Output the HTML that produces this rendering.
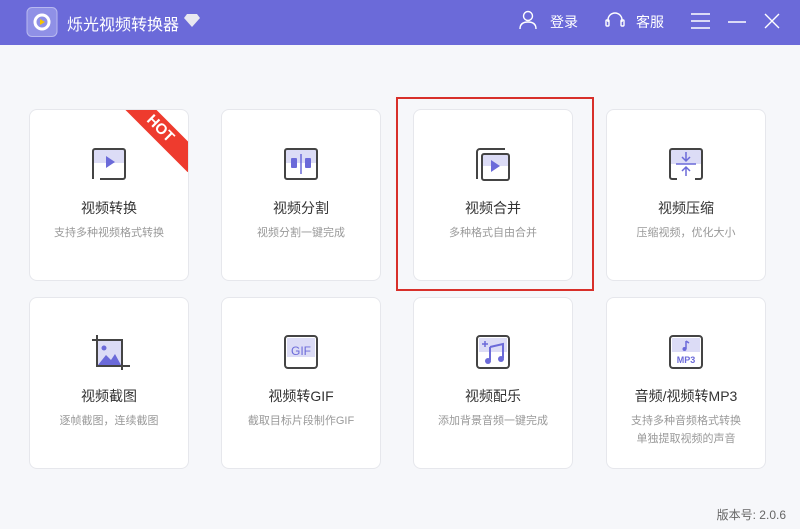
<!DOCTYPE html>
<html><head><meta charset="utf-8"><style>
*{margin:0;padding:0;box-sizing:border-box}
body{width:800px;height:529px;background:#f6f7fa;font-family:"Liberation Sans","Noto Sans CJK SC",sans-serif;position:relative;overflow:hidden}
.hd{position:absolute;left:0;top:0;width:800px;height:45px;background:#6b6ad9;color:#fff}
.card{position:absolute;width:160px;height:172px;background:#fff;border:1px solid #e6e7ec;border-radius:8px;text-align:center;overflow:hidden}
.card svg.ic{position:absolute;left:61px;top:36px}
.t{position:absolute;left:0;right:0;top:88px;font-size:14px;color:#333}
.s{position:absolute;left:0;right:0;top:114px;font-size:11px;color:#999;line-height:18px}
</style></head><body>
<div class="hd">
<svg style="position:absolute;left:26px;top:7px" width="32" height="30" viewBox="0 0 32 30"><rect x="1" y="0.5" width="30" height="29" rx="5" fill="#8f90e6" stroke="#b8b9f0"/><circle cx="16" cy="15" r="7" fill="none" stroke="#fff" stroke-width="3"/><path d="M14 12l5 3-5 3z" fill="#f5c400"/></svg>
<div style="position:absolute;left:67px;top:11px;font-size:16px">烁光视频转换器</div>
<svg style="position:absolute;left:183px;top:13px" width="18" height="15" viewBox="0 0 18 15"><path d="M4 1h10l3 4-8 9-8-9z" fill="#e8e8f0"/></svg>
<svg style="position:absolute;left:519px;top:10px" width="18" height="20" viewBox="0 0 18 20" fill="none" stroke="#fff" stroke-width="1.4"><circle cx="9" cy="6" r="4.5"/><path d="M1 19c0-5 3-7 8-7s8 2 8 7"/></svg>
<div style="position:absolute;left:550px;top:12px;font-size:14px">登录</div>
<svg style="position:absolute;left:605px;top:11px" width="20" height="18" viewBox="0 0 20 18" fill="none" stroke="#fff" stroke-width="1.4"><path d="M3 11V9a7 7 0 0114 0v2"/><rect x="1" y="9" width="3" height="6" rx="1"/><rect x="16" y="9" width="3" height="6" rx="1"/></svg>
<div style="position:absolute;left:636px;top:12px;font-size:14px">客服</div>
<svg style="position:absolute;left:690px;top:12px" width="90" height="20" viewBox="0 0 90 20" stroke="#fff" stroke-width="1.4" fill="none"><path d="M1 2h19M1 9h19M1 16h19"/><path d="M38 10h18"/><path d="M75 2l14 14M89 2L75 16"/></svg>
</div>

<div class="card" style="left:29px;top:109px">
<svg class="ic" width="36" height="36" viewBox="0 0 36 36"><rect x="2" y="3" width="32" height="14" fill="#dcdcf6"/><path d="M2 33V5a2 2 0 012-2h28a2 2 0 012 2v26a2 2 0 01-2 2H9" fill="none" stroke="#444" stroke-width="2"/><path d="M15 10l9 6-9 6z" fill="#6b6ad9"/></svg>
<div style="position:absolute;right:-22px;top:8px;width:100px;height:22px;background:#ee3b2e;color:#fff;font-weight:bold;font-size:15px;line-height:22px;transform:rotate(45deg);text-align:center">HOT</div>
<div class="t">视频转换</div><div class="s">支持多种视频格式转换</div></div>

<div class="card" style="left:221px;top:109px">
<svg class="ic" width="36" height="36" viewBox="0 0 36 36"><rect x="2" y="3" width="32" height="14" fill="#dcdcf6"/><rect x="2" y="3" width="32" height="30" rx="2" fill="none" stroke="#444" stroke-width="2"/><rect x="8" y="12" width="6" height="10" rx="1" fill="#6b6ad9"/><rect x="22" y="12" width="6" height="10" rx="1" fill="#6b6ad9"/><path d="M18 8v20" stroke="#6b6ad9" stroke-width="1.5"/></svg>
<div class="t">视频分割</div><div class="s">视频分割一键完成</div></div>

<div class="card" style="left:413px;top:109px">
<svg class="ic" width="36" height="36" viewBox="0 0 36 36"><path d="M2 33V6a3 3 0 013-3h25" fill="none" stroke="#444" stroke-width="2"/><rect x="7" y="8" width="26" height="12" fill="#dcdcf6"/><rect x="7" y="8" width="27" height="26" rx="2" fill="none" stroke="#444" stroke-width="2"/><path d="M16 14l9 6-9 6z" fill="#6b6ad9"/></svg>
<div class="t">视频合并</div><div class="s">多种格式自由合并</div></div>

<div class="card" style="left:606px;top:109px">
<svg class="ic" width="36" height="36" viewBox="0 0 36 36"><rect x="2" y="3" width="32" height="15" fill="#dcdcf6"/><path d="M9 33H4a2 2 0 01-2-2V5a2 2 0 012-2h28a2 2 0 012 2v26a2 2 0 01-2 2h-5" fill="none" stroke="#444" stroke-width="2"/><path d="M8 18h20M18 6v9M14 11l4 4 4-4M18 30v-9M14 25l4-4 4 4" fill="none" stroke="#6b6ad9" stroke-width="1.5"/></svg>
<div class="t">视频压缩</div><div class="s">压缩视频，优化大小</div></div>

<div class="card" style="left:29px;top:297px">
<svg class="ic" width="40" height="40" viewBox="0 0 40 40" style="left:60px"><path d="M2 6h30v30M7 1v31h33" fill="none" stroke="#444" stroke-width="2"/><rect x="8" y="7" width="23" height="24" fill="#dcdcf6"/><circle cx="14" cy="14" r="2.5" fill="#6b6ad9"/><path d="M8 31l8-10 5 5 4-6 6 11z" fill="#6b6ad9"/></svg>
<div class="t">视频截图</div><div class="s">逐帧截图，连续截图</div></div>

<div class="card" style="left:221px;top:297px">
<svg class="ic" width="36" height="36" viewBox="0 0 36 36"><rect x="2" y="2" width="32" height="32" rx="3" fill="#fff" stroke="#444" stroke-width="2"/><rect x="4" y="4" width="28" height="19" fill="#dcdcf6"/><text x="18" y="21" font-size="12" font-family="Liberation Sans" fill="#6b6ad9" text-anchor="middle">GIF</text></svg>
<div class="t">视频转GIF</div><div class="s">截取目标片段制作GIF</div></div>

<div class="card" style="left:413px;top:297px">
<svg class="ic" width="36" height="36" viewBox="0 0 36 36"><rect x="2" y="2" width="32" height="32" rx="3" fill="#fff" stroke="#444" stroke-width="2"/><rect x="4" y="4" width="28" height="14" fill="#dcdcf6"/><path d="M7 10h6M10 7v6" stroke="#6b6ad9" stroke-width="1.5"/><path d="M15 13l13-3v14" fill="none" stroke="#6b6ad9" stroke-width="2"/><path d="M15 13v13" stroke="#6b6ad9" stroke-width="2"/><circle cx="13" cy="27" r="3" fill="#6b6ad9"/><circle cx="26" cy="25" r="3" fill="#6b6ad9"/></svg>
<div class="t">视频配乐</div><div class="s">添加背景音频一键完成</div></div>

<div class="card" style="left:606px;top:297px">
<svg class="ic" width="36" height="36" viewBox="0 0 36 36"><rect x="2" y="2" width="32" height="32" rx="3" fill="#fff" stroke="#444" stroke-width="2"/><rect x="4" y="4" width="28" height="14" fill="#dcdcf6"/><path d="M18 7v8" stroke="#6b6ad9" stroke-width="1.5"/><path d="M18 7l3 2" stroke="#6b6ad9" stroke-width="1.5"/><circle cx="16.5" cy="15" r="2" fill="#6b6ad9"/><text x="18" y="29" font-size="9" font-weight="bold" font-family="Liberation Sans" fill="#6b6ad9" text-anchor="middle">MP3</text></svg>
<div class="t">音频/视频转MP3</div><div class="s">支持多种音频格式转换<br>单独提取视频的声音</div></div>

<div style="position:absolute;left:396px;top:97px;width:198px;height:194px;border:2px solid #d8302a"></div>
<div style="position:absolute;right:14px;top:506px;font-size:12px;color:#666">版本号: 2.0.6</div>
</body></html>
